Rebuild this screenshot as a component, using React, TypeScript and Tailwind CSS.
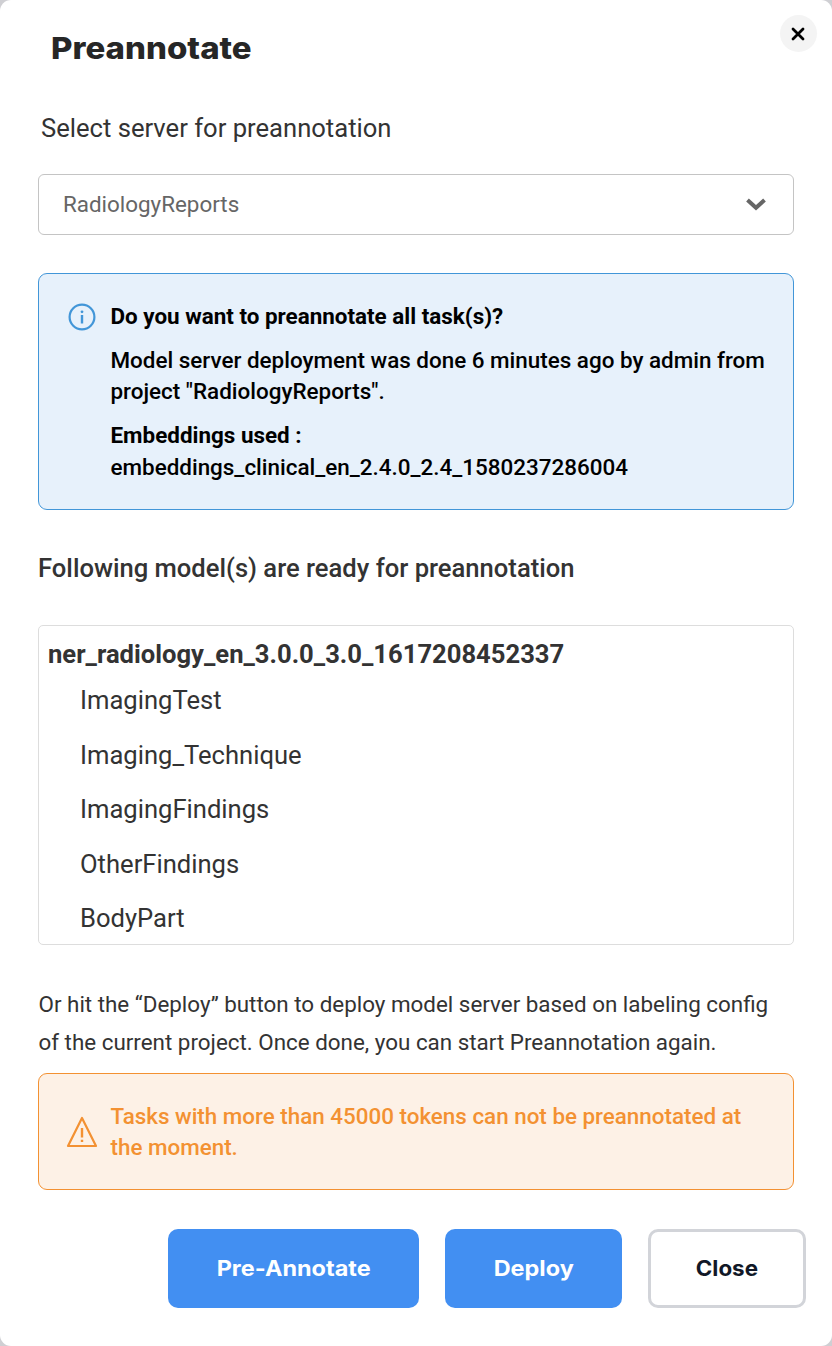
import React from "react";

const labels = ["ImagingTest", "Imaging_Technique", "ImagingFindings", "OtherFindings", "BodyPart"];

function CloseIcon() {
  return (
    <svg className="-translate-x-px" width="14" height="14" viewBox="0 0 14 14" fill="none" stroke="#000" strokeWidth="2.8" strokeLinecap="round">
      <path d="M2 2l10 10M12 2l-10 10" />
    </svg>
  );
}

function ChevronIcon() {
  return (
    <svg width="20" height="13" viewBox="0 0 20 13" fill="none" stroke="#666" strokeWidth="4">
      <path d="M1.5 2L10 9.7L18.5 2" />
    </svg>
  );
}

function InfoIcon() {
  return (
    <svg width="28" height="28" viewBox="0 0 28 28" fill="none" stroke="#4296d8" strokeWidth="2.2">
      <circle cx="14" cy="14" r="12.4" />
      <path d="M14 12v8.5" strokeWidth="2.4" />
      <circle cx="14" cy="8.8" r="1.4" fill="#4296d8" stroke="none" />
    </svg>
  );
}

function WarningIcon() {
  return (
    <svg width="32" height="32" viewBox="0 0 32 32" fill="none" stroke="#f39132" strokeWidth="2.2">
      <path d="M16 2L30 30H2Z" strokeLinejoin="round" />
      <path d="M16 12v9.5M16 23.8v2.2" strokeWidth="2.4" />
    </svg>
  );
}

export default function App() {
  return (
    <div className="h-[1346px] w-[832px] bg-[#cfcfd3]">
      <div className="flex h-full flex-col rounded-[11px] bg-white pt-[15px] font-['Roboto',sans-serif] text-[#333]">
        <header className="flex h-[66px] items-start justify-between pr-[15px] pl-[51px]">
          <h1 className="mt-[13px] origin-left scale-x-[1.1] font-['Inter',sans-serif] text-[30px] leading-[40px] font-extrabold text-[#262626]">
            Preannotate
          </h1>
          <button className="flex size-[37px] items-center justify-center rounded-full bg-[#f4f4f4]" aria-label="Close">
            <CloseIcon />
          </button>
        </header>

        <main className="flex flex-col px-[38px]">
          <label className="mt-[31px] pl-[3px] text-[25.6px] leading-[32px] whitespace-nowrap">
            Select server for preannotation
          </label>
          <div className="mt-[30px] flex h-[61px] items-center justify-between rounded-[6px] border border-[#c4c4c4] pr-[27px] pl-[24px] text-[#666]">
            <span className="text-[22.4px]">RadiologyReports</span>
            <ChevronIcon />
          </div>

          <section className="mt-[38px] flex h-[237px] rounded-[9px] border border-[#4296d8] bg-[#e7f1fb] pt-[27px] pl-[29px] text-[22.43px] leading-[31.5px] font-medium whitespace-nowrap text-black">
            <div className="mt-[2px] mr-[14.5px]">
              <InfoIcon />
            </div>
            <div>
              <p className="font-bold">Do you want to preannotate all task(s)?</p>
              <p className="mt-[12px]">
                Model server deployment was done 6 minutes ago by admin from
                <br />
                project "RadiologyReports".
              </p>
              <p className="mt-[12.5px]">
                <strong>Embeddings used :</strong>
                <br />
                embeddings_clinical_en_2.4.0_2.4_1580237286004
              </p>
            </div>
          </section>

          <h2 className="mt-[42px] text-[25.6px] leading-[32px] font-medium whitespace-nowrap">
            Following model(s) are ready for preannotation
          </h2>
          <section className="mt-[41px] h-[320px] overflow-hidden rounded-[5px] border border-[#ddd] pt-[12px] pl-[9px]">
            <h3 className="text-[25.6px] leading-[32px] font-bold">ner_radiology_en_3.0.0_3.0_1617208452337</h3>
            <ul className="mt-[3px] pl-[32px] text-[25.6px] leading-[54.5px]">
              {labels.map((label) => (
                <li key={label}>{label}</li>
              ))}
            </ul>
          </section>

          <p className="mt-[40px] pl-[0.5px] text-[22.4px] leading-[38px] whitespace-nowrap">
            Or hit the “Deploy” button to deploy model server based on labeling config
            <br />
            of the current project. Once done, you can start Preannotation again.
          </p>
          <section className="mt-[12px] flex h-[117px] items-center rounded-[9px] border border-[#f39132] bg-[#fdf1e6] pl-[27px] text-[22.4px] leading-[31px] font-medium whitespace-nowrap text-[#f39132]">
            <div className="mr-[12.5px]">
              <WarningIcon />
            </div>
            <p>
              Tasks with more than 45000 tokens can not be preannotated at
              <br />
              the moment.
            </p>
          </section>
        </main>

        <footer className="mt-[39px] flex h-[79px] justify-end gap-[26px] pr-[26px] font-['Inter',sans-serif] text-[21.5px] font-bold">
          <button className="w-[251px] rounded-[10px] bg-[#428ff2] text-white">
            <span className="inline-block scale-x-[1.09]">Pre-Annotate</span>
          </button>
          <button className="w-[177px] rounded-[10px] bg-[#428ff2] text-white">
            <span className="inline-block scale-x-[1.09]">Deploy</span>
          </button>
          <button className="w-[158px] rounded-[10px] border-[3px] border-[#d2d4d9] text-[#111827]">
            <span className="inline-block scale-x-[1.04]">Close</span>
          </button>
        </footer>
      </div>
    </div>
  );
}
